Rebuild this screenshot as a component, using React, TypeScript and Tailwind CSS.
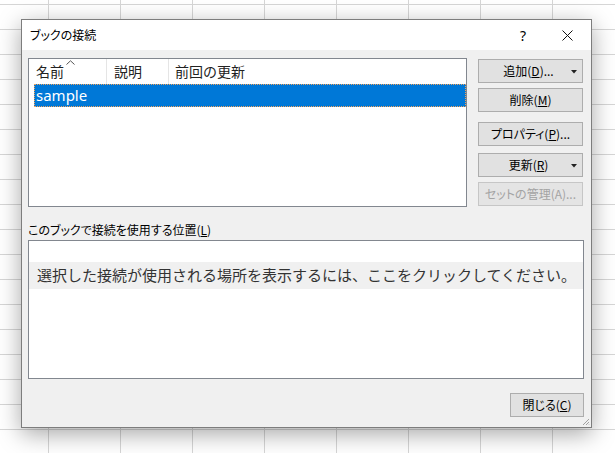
import React from "react";

const ui = "font-['Noto_Sans_CJK_JP','Noto_Sans',sans-serif]";

const Btn = ({
  children,
  className = "",
  disabled = false,
  split = false,
}: {
  children: React.ReactNode;
  className?: string;
  disabled?: boolean;
  split?: boolean;
}) => (
  <div
    className={`relative flex h-[24px] items-center justify-center border text-[12px] leading-none [font-feature-settings:'palt'] ${
      disabled
        ? "border-[#c6c6c6] bg-[#e4e4e4] text-[#a3a3a3]"
        : "border-[#adadad] bg-[#e1e1e1] text-black"
    } ${className}`}
  >
    <span className={split ? "-ml-[4px]" : ""}>{children}</span>
    {split && (
      <svg className="absolute right-[5px] top-[10px]" width="6" height="4" viewBox="0 0 6 4">
        <path d="M0 0H6L3 3.5Z" fill="#222" />
      </svg>
    )}
  </div>
);

const U = ({ c }: { c: string }) => <span className="underline underline-offset-1">{c}</span>;

export default function App() {
  return (
    <div
      className={`relative h-[453px] w-[615px] overflow-hidden bg-white ${ui} bg-[linear-gradient(to_right,#d6d6d6_1px,transparent_1px),linear-gradient(to_bottom,#d6d6d6_1px,transparent_1px)] bg-[size:72px_25px] bg-[position:48px_4px]`}
    >
      {/* dialog window */}
      <div className="absolute left-[21px] top-[19px] flex h-[409px] w-[571px] flex-col border border-[#7d7d7d] bg-[#f0f0f0] shadow-[0_6px_22px_rgba(0,0,0,0.35)]">
        {/* title bar */}
        <div className="flex h-[30px] items-center bg-white pl-[8px] text-[12px] text-black [font-feature-settings:'palt']">
          <span className="flex-1">ブックの接続</span>
          <span className="w-[14px] text-center text-[14px] font-['Noto_Sans',sans-serif]">?</span>
          <div className="ml-[31px] mr-[18px] flex w-[12px] justify-center">
            <svg width="11" height="11" viewBox="0 0 11 11">
              <path d="M0.5 0.5L10.5 10.5M10.5 0.5L0.5 10.5" stroke="#111" strokeWidth="1" />
            </svg>
          </div>
        </div>

        {/* body */}
        <div className="flex flex-1 flex-col pl-[6px] pr-[7px] pt-[8px]">
          <div className="flex gap-[11px]">
            {/* list view */}
            <div className="relative h-[149px] w-[439px] border border-[#82878f] bg-white">
              <div className="flex h-[25px] items-center text-[14px] text-[#222]">
                <div className="relative flex h-full w-[78px] items-center border-r border-[#e5e5e5] pl-[7px]">
                  名前
                  <svg className="absolute left-[37px] top-[1px]" width="9" height="5" viewBox="0 0 9 5">
                    <path d="M0.5 4.5L4.5 0.8L8.5 4.5" stroke="#555" fill="none" strokeWidth="1" />
                  </svg>
                </div>
                <div className="flex h-full w-[62px] items-center border-r border-[#e5e5e5] pl-[7px]">説明</div>
                <div className="flex h-full items-center pl-[6px]">前回の更新</div>
              </div>
              <div className="ml-[5px] flex h-[23px] items-center bg-[#0078d7] pl-[2px] text-[15px] text-white outline outline-1 -outline-offset-1 outline-dotted outline-[#f3a35b] font-['Noto_Sans',sans-serif]">
                sample
              </div>
            </div>

            {/* button column */}
            <div className="flex w-[105px] flex-col pt-[1px]">
              <Btn split>
                追加(<U c="D" />)...
              </Btn>
              <Btn className="mt-[5px]">
                削除(<U c="M" />)
              </Btn>
              <Btn className="mt-[10px]">
                プロパティ(<U c="P" />)...
              </Btn>
              <Btn className="mt-[7px]" split>
                更新(<U c="R" />)
              </Btn>
              <Btn className="mt-[5px]" disabled>
                セットの管理(A)...
              </Btn>
            </div>
          </div>

          <div className="mt-[15px] h-[16px] text-[12px] leading-[16px] text-black [font-feature-settings:'palt']">
            このブックで接続を使用する位置(<U c="L" />)
          </div>

          <div className="mt-[2px] h-[139px] border border-[#82878f] bg-white">
            <div className="mt-[21px] flex h-[27px] items-center bg-[#f0f0f0] pl-[8px] text-[15px] text-[#333]">
              選択した接続が使用される場所を表示するには、ここをクリックしてください。
            </div>
          </div>

          <div className="mt-[14px] flex justify-end">
            <Btn className="w-[74px]">
              閉じる(<U c="C" />)
            </Btn>
          </div>
        </div>

        {/* size grip */}
        <svg className="absolute bottom-[1px] right-[1px]" width="8" height="8" viewBox="0 0 8 8">
          <path d="M7 1L1 7M7 4L4 7M7 6.5L6.5 7" stroke="#a0a0a0" strokeWidth="1" />
        </svg>
      </div>
    </div>
  );
}
